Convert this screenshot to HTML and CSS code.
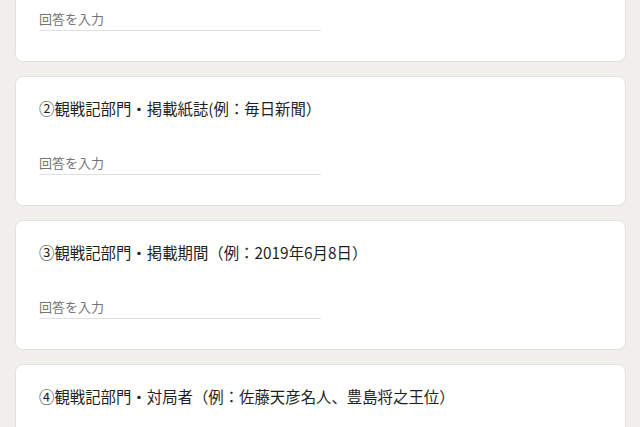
FILE: index.html
```html
<!DOCTYPE html>
<html lang="ja">
<head>
<meta charset="utf-8">
<title>Form</title>
<link rel="stylesheet" href="styles.css">
</head>
<body>
<main class="form">
  <section class="card">
    <div class="title"></div>
    <div class="answer"><span class="placeholder">回答を入力</span></div>
  </section>
  <section class="card">
    <div class="title">②観戦記部門・掲載紙誌(例：毎日新聞）</div>
    <div class="answer"><span class="placeholder">回答を入力</span></div>
  </section>
  <section class="card">
    <div class="title">③観戦記部門・掲載期間（例：2019年6月8日）</div>
    <div class="answer"><span class="placeholder">回答を入力</span></div>
  </section>
  <section class="card">
    <div class="title">④観戦記部門・対局者（例：佐藤天彦名人、豊島将之王位）</div>
  </section>
</main>
</body>
</html>
```
FILE: styles.css
```css
html, body {
  margin: 0;
  padding: 0;
  background: #f0efec;
  overflow: hidden;
}
body {
  font-family: "Noto Sans CJK JP", "Noto Sans", sans-serif;
  color: #202124;
}
.form {
  display: flex;
  flex-direction: column;
  gap: 14px;
  padding: 0 14px 0 15px;
  margin-top: -68px;
}
.card {
  box-sizing: border-box;
  height: 130px;
  background: #ffffff;
  border: 1px solid #e3e1dd;
  border-radius: 8px;
  padding: 21px 23px 30px;
}
.title {
  min-height: 20px;
  font-size: 15.4px;
  line-height: 20px;
  color: #1f1f1f;
  white-space: nowrap;
}
.answer {
  margin-top: 36px;
  width: 282px;
  padding-bottom: 2px;
  border-bottom: 1px solid #e0e0e0;
}
.placeholder {
  display: block;
  font-size: 13px;
  line-height: 18px;
  color: #70757a;
}
```
